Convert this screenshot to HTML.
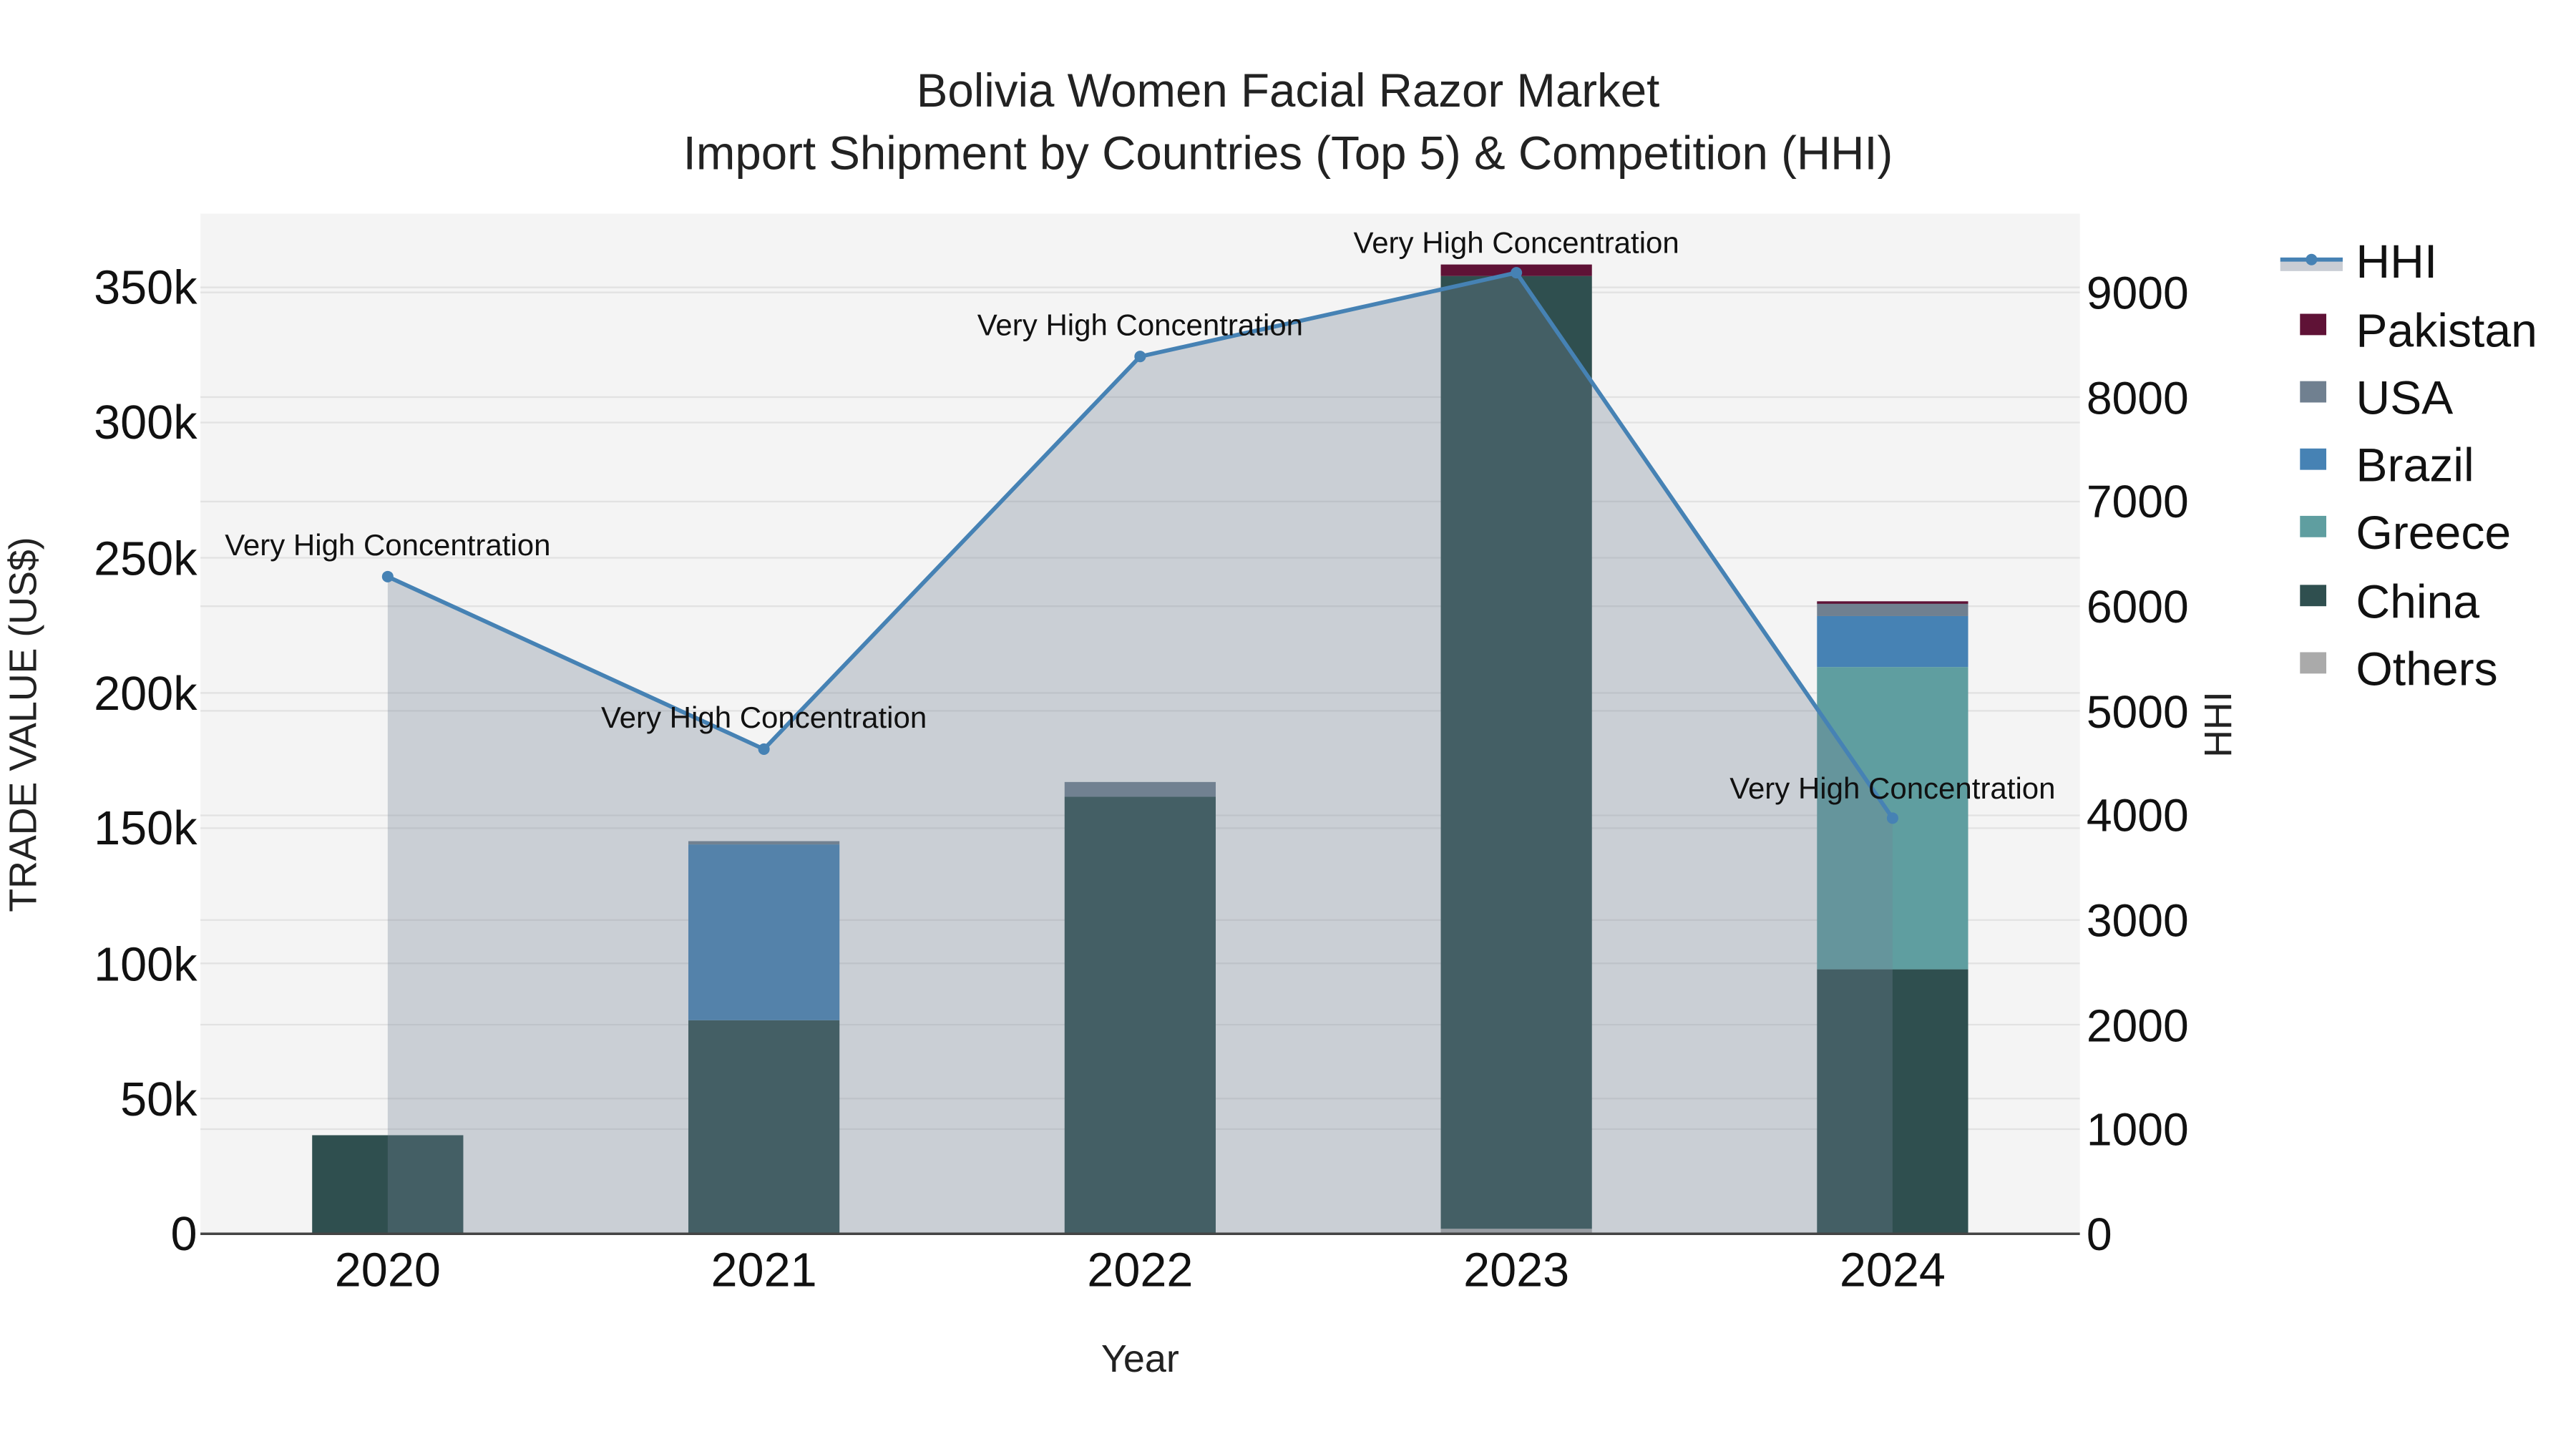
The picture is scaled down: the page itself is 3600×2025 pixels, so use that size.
<!DOCTYPE html>
<html><head><style>html,body{margin:0;padding:0;background:#fff}svg{display:block}</style></head><body>
<svg width="3600" height="2025" viewBox="0 0 1568 882" xmlns="http://www.w3.org/2000/svg" font-family="Liberation Sans, sans-serif">
<rect width="1568" height="882" fill="#fff"/>
<rect x="122" y="130" width="1144" height="621" fill="#f4f4f4"/>
<g stroke="#e2e2e2" stroke-width="1">
<line x1="122" x2="1266" y1="668.7" y2="668.7"/><line x1="122" x2="1266" y1="586.4" y2="586.4"/><line x1="122" x2="1266" y1="504.1" y2="504.1"/><line x1="122" x2="1266" y1="421.8" y2="421.8"/><line x1="122" x2="1266" y1="339.5" y2="339.5"/><line x1="122" x2="1266" y1="257.2" y2="257.2"/><line x1="122" x2="1266" y1="174.9" y2="174.9"/>
<line x1="122" x2="1266" y1="687.3" y2="687.3"/><line x1="122" x2="1266" y1="623.7" y2="623.7"/><line x1="122" x2="1266" y1="560" y2="560"/><line x1="122" x2="1266" y1="496.3" y2="496.3"/><line x1="122" x2="1266" y1="432.7" y2="432.7"/><line x1="122" x2="1266" y1="369" y2="369"/><line x1="122" x2="1266" y1="305.3" y2="305.3"/><line x1="122" x2="1266" y1="241.7" y2="241.7"/><line x1="122" x2="1266" y1="178" y2="178"/>
</g>
<rect x="190" y="691" width="92" height="60" fill="#2f4f4f"/>
<rect x="419" y="621" width="92" height="130" fill="#2f4f4f"/>
<rect x="419" y="514" width="92" height="107" fill="#4682b4"/>
<rect x="419" y="512" width="92" height="2" fill="#708090"/>
<rect x="648" y="485" width="92" height="266" fill="#2f4f4f"/>
<rect x="648" y="476" width="92" height="9" fill="#708090"/>
<rect x="877" y="168" width="92" height="580" fill="#2f4f4f"/>
<rect x="877" y="748" width="92" height="3" fill="#aaaaaa"/>
<rect x="877" y="161" width="92" height="7" fill="#5f1236"/>
<rect x="1106" y="590" width="92" height="161" fill="#2f4f4f"/>
<rect x="1106" y="406" width="92" height="184" fill="#5f9ea0"/>
<rect x="1106" y="375" width="92" height="31" fill="#4682b4"/>
<rect x="1106" y="367" width="92" height="8" fill="#708090"/>
<rect x="1106" y="366" width="92" height="1.5" fill="#5f1236"/>
<polygon points="236,351 465,456 694,217 923,166 1152,498 1152,751 236,751" fill="rgba(115,130,150,0.32)"/>
<polyline points="236,351 465,456 694,217 923,166 1152,498" fill="none" stroke="#4682b4" stroke-width="2.5"/>
<g fill="#4682b4"><circle cx="236" cy="351" r="3.5"/><circle cx="465" cy="456" r="3.5"/><circle cx="694" cy="217" r="3.5"/><circle cx="923" cy="166" r="3.5"/><circle cx="1152" cy="498" r="3.5"/></g>
<line x1="122" x2="1266" y1="751" y2="751" stroke="#444" stroke-width="1.5"/>
<g font-size="18.3" text-anchor="middle" fill="#111">
<text x="236" y="338">Very High Concentration</text>
<text x="465" y="443">Very High Concentration</text>
<text x="694" y="204">Very High Concentration</text>
<text x="923" y="154">Very High Concentration</text>
<text x="1152" y="486">Very High Concentration</text>
</g>
<g text-anchor="middle" fill="#222" font-size="28.5">
<text x="784" y="65">Bolivia Women Facial Razor Market</text>
<text x="784" y="103">Import Shipment by Countries (Top 5) &amp; Competition (HHI)</text>
</g>
<g font-size="29" fill="#111" text-anchor="end">
<text x="120" y="761">0</text><text x="120" y="679">50k</text><text x="120" y="597">100k</text><text x="120" y="514">150k</text><text x="120" y="432">200k</text><text x="120" y="350">250k</text><text x="120" y="267">300k</text><text x="120" y="185">350k</text>
</g>
<g font-size="28" fill="#111">
<text x="1270" y="761">0</text><text x="1270" y="697">1000</text><text x="1270" y="634">2000</text><text x="1270" y="570">3000</text><text x="1270" y="506">4000</text><text x="1270" y="443">5000</text><text x="1270" y="379">6000</text><text x="1270" y="315">7000</text><text x="1270" y="252">8000</text><text x="1270" y="188">9000</text>
</g>
<g font-size="29" fill="#111" text-anchor="middle">
<text x="236" y="783">2020</text><text x="465" y="783">2021</text><text x="694" y="783">2022</text><text x="923" y="783">2023</text><text x="1152" y="783">2024</text>
</g>
<text x="694" y="835" font-size="23.5" text-anchor="middle" fill="#222">Year</text>
<text transform="translate(22,441) rotate(-90)" font-size="23.4" text-anchor="middle" fill="#222">TRADE VALUE (US$)</text>
<text transform="translate(1358,441) rotate(-90)" font-size="23.4" text-anchor="middle" fill="#222">HHI</text>
<rect x="1388" y="159" width="38" height="6" fill="#c9cdd4"/>
<line x1="1388" x2="1426" y1="158" y2="158" stroke="#4682b4" stroke-width="2.5"/>
<circle cx="1407" cy="158" r="3.5" fill="#4682b4"/>
<g font-size="28.8" fill="#111">
<text x="1434" y="169">HHI</text>
<text x="1434" y="211">Pakistan</text>
<text x="1434" y="252">USA</text>
<text x="1434" y="293">Brazil</text>
<text x="1434" y="334">Greece</text>
<text x="1434" y="376">China</text>
<text x="1434" y="417">Others</text>
</g>
<rect x="1400" y="191" width="16" height="13" fill="#5f1236"/>
<rect x="1400" y="232" width="16" height="13" fill="#708090"/>
<rect x="1400" y="273" width="16" height="13" fill="#4682b4"/>
<rect x="1400" y="314" width="16" height="13" fill="#5f9ea0"/>
<rect x="1400" y="356" width="16" height="13" fill="#2f4f4f"/>
<rect x="1400" y="397" width="16" height="13" fill="#aaaaaa"/>
</svg>
</body></html>
